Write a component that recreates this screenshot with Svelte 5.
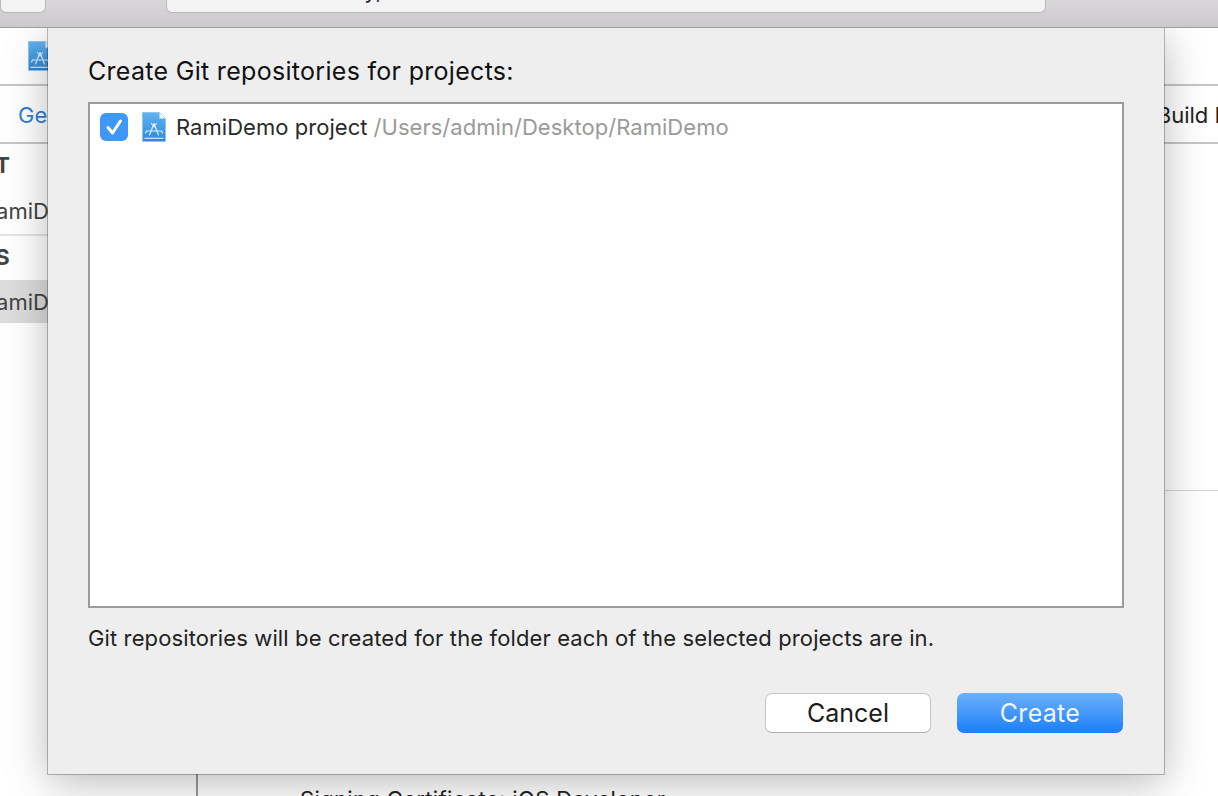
<script>
	const sidebar = [
		{ label: 'PROJECT', kind: 'head' },
		{ label: 'RamiDemo', kind: 'entry' },
		{ label: 'TARGETS', kind: 'head' },
		{ label: 'RamiDemo', kind: 'entry selected' }
	];
</script>

{#snippet projectIcon()}
	<svg viewBox="0 0 24 30" width="24" height="30" fill="none">
		<defs>
			<linearGradient id="doc" x1="0" y1="0" x2="0" y2="1">
				<stop offset="0" stop-color="#62b4f0" />
				<stop offset="1" stop-color="#2c88dc" />
			</linearGradient>
		</defs>
		<path d="M0.5 0.5H17.5L23.5 6.5V29.5H0.5Z" fill="url(#doc)" stroke="#8fc6ef" />
		<path d="M17.5 0.5V6.5H23.5Z" fill="#eef6fd" stroke="#a8d3f3" stroke-width="0.6" />
		<path d="M2.5 26.3H21.5" stroke="#dcedfb" stroke-width="1.2" />
		<path
			d="M7.5 23L12 11.5L16.5 23M9.5 11.5L12 15M14.5 11.5L12 15M4.5 19H19.5M4.5 19L3.5 21M19.5 19L20.5 21"
			stroke="#d8ebfb"
			stroke-width="1.2"
			stroke-linecap="round"
			stroke-linejoin="round"
		/>
	</svg>
{/snippet}

<div class="window">
	<header class="toolbar">
		<div class="field small"></div>
		<div class="field wide"><span>Today, 2017)</span></div>
	</header>

	<div class="project-bar">{@render projectIcon()}</div>

	<nav class="tabs">
		<span class="tab-general">General</span>
		<span class="tab-build">Build Phases</span>
	</nav>

	<div class="body">
		<aside class="sidebar">
			{#each sidebar as item}
				<div class="item {item.kind}">
					<span>{item.label}</span>
				</div>
			{/each}
		</aside>
		<main class="settings">
			<div class="signing">Signing Certificate: iOS Developer</div>
		</main>
	</div>

	<div class="rule"></div>
</div>

<section class="dialog">
	<h1>Create Git repositories for projects:</h1>

	<div class="list">
		<label class="row">
			<span class="check">
				<svg viewBox="0 0 28 28" width="28" height="28" fill="none">
					<path d="M8 14.5L12.5 20L20.5 8" stroke="#fff" stroke-width="3" stroke-linecap="round" stroke-linejoin="round" />
				</svg>
			</span>
			<span class="icon">{@render projectIcon()}</span>
			<span class="name">RamiDemo project</span>
			<span class="path">/Users/admin/Desktop/RamiDemo</span>
		</label>
	</div>

	<p class="note">Git repositories will be created for the folder each of the selected projects are in.</p>

	<div class="actions">
		<button class="cancel">Cancel</button>
		<button class="create">Create</button>
	</div>
</section>

<style>
	:global(body) {
		margin: 0;
		background: #fff;
		overflow: hidden;
		font-family: Inter, 'Liberation Sans', sans-serif;
	}
	.window {
		position: relative;
		width: 1218px;
		height: 796px;
		overflow: hidden;
		display: flex;
		flex-direction: column;
	}
	.toolbar {
		height: 28px;
		flex: none;
		display: flex;
		gap: 120px;
		align-items: flex-start;
		background: linear-gradient(#d9d7d9, #cbc9cb);
		border-bottom: 1px solid #9d9d9d;
		box-sizing: border-box;
	}
	.field {
		height: 13px;
		background: #f4f3f4;
		border: 1px solid #b9b7b9;
		border-top: none;
		border-radius: 0 0 6px 6px;
		box-sizing: border-box;
		overflow: hidden;
	}
	.small {
		width: 46px;
	}
	.wide {
		width: 880px;
	}
	.wide span {
		display: block;
		margin-top: -22px;
		padding-left: 146px;
		font-size: 22px;
		line-height: 24px;
		color: #222;
	}
	.project-bar {
		height: 58px;
		flex: none;
		box-sizing: border-box;
		padding: 13px 0 0 28px;
		border-bottom: 2px solid #c6c6c6;
	}
	.tabs {
		height: 58px;
		flex: none;
		box-sizing: border-box;
		display: flex;
		justify-content: space-between;
		align-items: center;
		padding: 1px 0 0 18px;
		border-bottom: 2px solid #c6c6c6;
		font-size: 22px;
	}
	.tab-general {
		color: #2f80d0;
	}
	.tab-build {
		color: #222;
		margin-right: -72px;
	}
	.body {
		flex: 1;
		display: flex;
	}
	.sidebar {
		width: 198px;
		flex: none;
		box-sizing: border-box;
		border-right: 2px solid #9a9a9a;
		font-size: 22px;
		color: #444;
		white-space: nowrap;
	}
	.item {
		height: 44px;
		box-sizing: border-box;
		display: flex;
		align-items: center;
		text-indent: -18px;
	}
	.item.head {
		font-weight: 700;
		padding-bottom: 2px;
		text-indent: -93px;
	}
	.item:nth-child(2) {
		height: 48px;
		border-bottom: 2px solid #e2e2e2;
	}
	.item.selected {
		height: 43px;
		background: #dcdcdc;
	}
	.settings {
		flex: 1;
		display: flex;
		flex-direction: column;
		justify-content: flex-end;
		padding-left: 102px;
	}
	.signing {
		font-size: 22px;
		letter-spacing: 0.35px;
		line-height: 24px;
		height: 9px;
		color: #222;
		white-space: nowrap;
	}
	.rule {
		position: absolute;
		left: 1165px;
		right: 0;
		top: 490px;
		height: 1px;
		background: #d4d4d4;
	}
	.dialog {
		position: absolute;
		left: 48px;
		top: 28px;
		width: 1116px;
		height: 746px;
		box-sizing: border-box;
		padding: 27px 40px 0;
		background: #eeeeee;
		box-shadow: 0 0 0 1px rgba(0, 0, 0, 0.25), 0 8px 40px rgba(0, 0, 0, 0.28);
		clip-path: inset(0 -80px -80px -80px);
		display: flex;
		flex-direction: column;
		color: #1c1c1c;
	}
	h1 {
		margin: 0;
		font-size: 25px;
		letter-spacing: 0.3px;
		line-height: 32px;
		font-weight: 400;
		color: #111;
	}
	.list {
		margin-top: 15px;
		height: 506px;
		box-sizing: border-box;
		background: #fff;
		border: 2px solid #9b9b9b;
		padding: 8px 10px;
	}
	.row {
		display: flex;
		align-items: center;
		height: 30px;
		font-size: 22px;
		letter-spacing: 0.04px;
	}
	.check {
		width: 28px;
		height: 28px;
		border-radius: 6px;
		background: #3f97f8;
		display: block;
	}
	.check svg {
		display: block;
	}
	.icon {
		margin-left: 14px;
		margin-right: 10px;
		height: 30px;
	}
	.name {
		color: #2a2a2a;
	}
	.path {
		margin-left: 6px;
		color: #9a9a9a;
	}
	.note {
		margin: 17px 0 0;
		font-size: 22px;
		letter-spacing: 0.12px;
		line-height: 26px;
		color: #222;
	}
	.actions {
		margin-top: 42px;
		display: flex;
		justify-content: flex-end;
		gap: 26px;
		padding-right: 1px;
	}
	button {
		width: 166px;
		height: 40px;
		border-radius: 7px;
		font: inherit;
		font-size: 25px;
		padding: 0;
	}
	.cancel {
		background: #fff;
		border: 1px solid #c6c6c6;
		border-bottom-color: #b0b0b0;
		color: #1c1c1c;
	}
	.create {
		background: linear-gradient(#6cb0fb, #1a7ff8);
		border: none;
		color: #f2f7ff;
		letter-spacing: 0.3px;
	}
</style>
